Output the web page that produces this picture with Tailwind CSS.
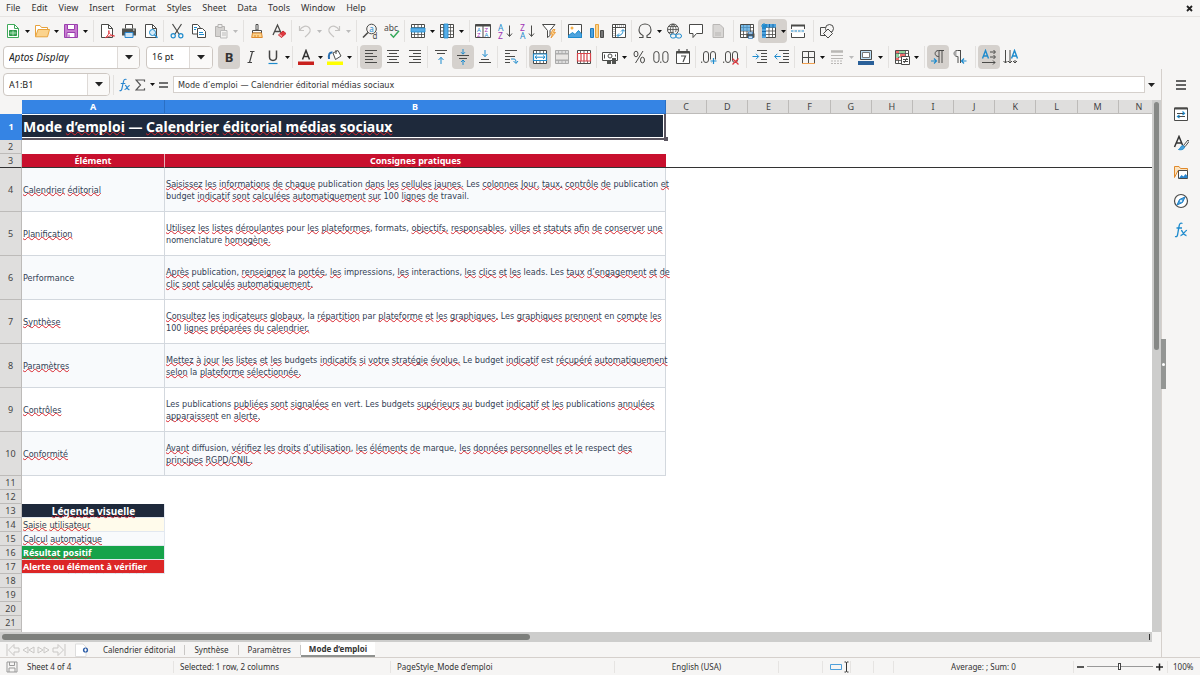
<!DOCTYPE html>
<html lang="fr">
<head>
  <meta charset="UTF-8">
  <meta name="viewport" content="width=device-width, initial-scale=1">
  <title>Calendrier éditorial - Mode d'emploi</title>
  <script src="https://cdn.jsdelivr.net/npm/@tailwindcss/browser@4"></script>
</head>
<body class="h-screen flex flex-col overflow-hidden bg-[#f6f5f4] text-[#333] font-['Noto_Sans',sans-serif] text-[9px] leading-[12px]">

  <!-- Menu -->
  <header class="h-[17px] shrink-0 flex items-center justify-between border-b border-[#e6e4e2] pl-px pr-[7px]">
    <nav id="menu" class="flex gap-px"></nav>
    <button aria-label="Close document">
      <svg class="size-[7px]" viewBox="0 0 7 7" stroke="#222" stroke-width="1.8"><path d="M1 1l5 5M6 1L1 6"/></svg>
    </button>
  </header>

  <!-- Barres d'outils -->
  <div id="standard" class="h-7 shrink-0 flex items-center pl-[2px]"></div>
  <div class="h-6 shrink-0 flex items-center pl-[3px]">
    <div class="flex h-[23px] w-[137px] rounded border border-[#cdc7c2] bg-white overflow-hidden">
      <input aria-label="Font name" value="Aptos Display" class="min-w-0 flex-1 pl-[5px] text-[10px] italic text-[#222] outline-none">
      <button aria-label="Choose font" class="w-[22px] border-l border-[#dedad7] bg-[#faf9f8] grid place-items-center"><svg class="w-2 h-[5px]" viewBox="0 0 8 5"><path d="M0 0h8L4 4.5z" fill="#222"/></svg></button>
    </div>
    <div class="flex h-[23px] w-[67px] ml-[6px] rounded border border-[#cdc7c2] bg-white overflow-hidden">
      <input aria-label="Font size" value="16 pt" class="min-w-0 flex-1 pl-[5px] text-[#222] outline-none">
      <button aria-label="Choose size" class="w-[23px] border-l border-[#dedad7] bg-[#faf9f8] grid place-items-center"><svg class="w-2 h-[5px]" viewBox="0 0 8 5"><path d="M0 0h8L4 4.5z" fill="#222"/></svg></button>
    </div>
    <div id="formatting" class="flex items-center ml-[5px]"></div>
  </div>

  <div class="flex-1 min-h-0 flex">
    <main class="flex-1 min-w-0 flex flex-col">

      <!-- Barre de formule -->
      <div class="h-[31px] shrink-0 flex items-center pl-[3px] pr-1">
        <div class="flex h-[23px] w-[107px] rounded border border-[#cdc7c2] bg-white overflow-hidden">
          <input aria-label="Name box" value="A1:B1" class="min-w-0 flex-1 pl-[5px] text-[#222] outline-none">
          <button aria-label="Named ranges" class="w-[22px] border-l border-[#dedad7] bg-[#faf9f8] grid place-items-center"><svg class="w-2 h-[5px]" viewBox="0 0 8 5"><path d="M0 0h8L4 4.5z" fill="#222"/></svg></button>
        </div>
        <div class="flex items-center ml-[3px] pl-[5px] border-l border-[#e3e1df] h-5">
          <button aria-label="Function wizard" class="w-4"><svg class="w-3 h-[14px]" viewBox="0 0 12 14" fill="none" stroke="#2a86cf" stroke-width="1.2"><path d="M7.5 1.5c-2-.8-2.7.5-3 2L2.8 11.2c-.3 1.3-1 1.8-2.3 1.3M1.8 5.5h4.5M6 7.5c1.8-.5 1.8 4.5 4.5 4M10.8 7.5c-1.5-.5-3.5 4.5-5.3 4"/></svg></button>
          <button aria-label="Select function" class="w-6 flex items-center gap-1"><svg class="w-[11px] h-3" viewBox="0 0 11 12" fill="none" stroke="#555" stroke-width="1.2"><path d="M9.5 2.8V1H1l4.5 5L1 11h8.5V9.2"/></svg><svg class="w-[5px] h-[3px]" viewBox="0 0 5 3"><path d="M0 0h5L2.5 3z" fill="#111"/></svg></button>
          <button aria-label="Formula" class="w-[14px]"><svg class="w-[9px] h-[14px]" viewBox="0 0 9 14" stroke="#444" stroke-width="1.5"><path d="M0 5h9M0 9h9"/></svg></button>
        </div>
        <input aria-label="Formula input" value="Mode d’emploi — Calendrier éditorial médias sociaux" class="flex-1 min-w-0 h-[17px] pl-1 border border-[#d5d0cc] bg-white font-['DejaVu_Sans_Condensed',sans-serif] outline-none">
        <button aria-label="Expand formula bar" class="w-3 grid place-items-center"><svg class="w-[7px] h-1" viewBox="0 0 7 4"><path d="M0 0h7L3.5 4z" fill="#222"/></svg></button>
      </div>

      <!-- Feuille -->
      <div class="flex-1 min-h-0 flex">
        <div class="flex-1 min-w-0 overflow-hidden bg-white">
          <table class="table-fixed w-[calc(100%+8px)] border-separate border-spacing-0 text-[#334155] [&_u]:decoration-wavy [&_u]:decoration-[#d8242c] [&_u]:decoration-1 [&_u]:-underline-offset-1 [&_u]:[text-decoration-skip-ink:none]">
            <thead>
              <tr id="colonnes" class="h-[14px]"></tr>
            </thead>
            <tbody id="cellules"></tbody>
          </table>
        </div>
        <div class="w-[9px] bg-[#cdcdcc] pt-[2px] flex justify-center">
          <div class="w-[5px] h-[248px] rounded-full bg-[#868886]"></div>
        </div>
      </div>

      <div class="flex h-[10px] shrink-0 mr-[9px] bg-[#cdcdcc] items-center justify-between pl-[2px] pr-[2px]">
        <div class="h-[6px] w-[46%] rounded-full bg-[#7d7f7c]"></div>
        <div class="h-[6px] w-px bg-[#333]"></div>
      </div>

      <!-- Onglets -->
      <div class="h-[15px] shrink-0 flex items-center">
        <div class="flex pl-[6px] w-[70px] text-[#c9c7c5]">
          <button aria-label="First sheet"><svg class="w-[15px] h-3" viewBox="0 0 15 12" fill="none" stroke="currentColor"><path d="M1 0v12M8 .5L2.500 6 8 11.500V8h5V4H8z"/></svg></button>
          <button aria-label="Previous sheet"><svg class="w-[15px] h-3" viewBox="0 0 15 12" fill="none" stroke="currentColor"><path d="M7 3L2 6l5 3zM13 3L8 6l5 3z"/></svg></button>
          <button aria-label="Next sheet"><svg class="w-[15px] h-3" viewBox="0 0 15 12" fill="none" stroke="currentColor"><path d="M2 3l5 3-5 3zM8 3l5 3-5 3z"/></svg></button>
          <button aria-label="Last sheet"><svg class="w-[15px] h-3" viewBox="0 0 15 12" fill="none" stroke="currentColor"><path d="M14 0v12M7 .5L12.500 6 7 11.500V8H2V4h5z"/></svg></button>
        </div>
        <button aria-label="Add sheet" class="w-[24px] pl-[5px]"><svg class="w-[14px] h-[14px]" viewBox="0 0 14 14"><path d="M.5 1h7.5l3 3v9.500H.5z" fill="#fff" stroke="#ddd"/><circle cx="10.5" cy="7" r="2.600" fill="#2f5fa8"/><path d="M10.5 5.500v3M9 7h3" stroke="#fff"/></svg></button>
        <div id="onglets" class="flex h-full items-center text-[8px]"></div>
      </div>
    </main>

    <!-- Barre latérale -->
    <aside class="relative w-[39px] shrink-0 border-l border-[#d5d0cc] flex flex-col items-center pt-px">
      <div id="lateral" class="flex flex-col"></div>
      <button aria-label="Hide sidebar" class="absolute -left-px top-[270px] w-[5px] h-[50px] bg-[#949694] grid place-items-center"><span class="size-[3px] rounded-full bg-white"></span></button>
    </aside>
  </div>

  <!-- Barre d'état -->
  <footer class="h-[18px] shrink-0 flex items-center border-t border-[#d5d0cc] text-[8px] [&>*]:shrink-0">
    <svg class="size-3 ml-[6px] mr-[9px]" viewBox="0 0 12 12" fill="none" stroke="#999"><path d="M1 1h10v10H1zM3.5 1v3.500h5V1M3 11V7h6v4"/></svg>
    <span class="w-[146px]">Sheet 4 of 4</span>
    <span class="w-[217px] border-l border-[#e6e4e2] pl-[6px]">Selected: 1 row, 2 columns</span>
    <span class="w-[224px] border-l border-[#e6e4e2] pl-[6px]">PageStyle_Mode d’emploi</span>
    <span class="flex-1 border-l border-[#e6e4e2] text-center">English (USA)</span>
    <span class="w-[44px] h-3 border-l border-[#e6e4e2]"></span>
    <span class="w-[28px] border-l border-[#e6e4e2] pl-[7px]"><svg class="w-[19px] h-3" viewBox="0 0 19 12" fill="none"><path d="M.5 3.500h11v5H.5z" stroke="#4d9fdb"/><path d="M14.5 1H16l.5.500.5-.5h1.500M16.500 1.500v9M14.500 11H16l.5-.5.5.5h1.500" stroke="#333"/></svg></span>
    <span class="w-[23px] h-3 border-l border-[#e6e4e2]"></span>
    <span class="w-[20px] h-3 border-l border-[#e6e4e2]"></span>
    <span class="w-[180px] border-l border-[#e6e4e2] text-center">Average: ; Sum: 0</span>
    <div class="w-[94px] flex items-center gap-[3px] border-l border-[#e6e4e2] pl-[3px]">
      <button aria-label="Zoom out"><svg class="w-[7px] h-3" viewBox="0 0 7 12" stroke="#222" stroke-width="1.5"><path d="M0 6h7"/></svg></button>
      <input type="range" aria-label="Zoom" min="0" max="100" value="49" class="w-[66px] h-3 appearance-none bg-transparent [&::-webkit-slider-runnable-track]:h-px [&::-webkit-slider-runnable-track]:bg-[#999] [&::-webkit-slider-thumb]:appearance-none [&::-webkit-slider-thumb]:w-[3px] [&::-webkit-slider-thumb]:h-[7px] [&::-webkit-slider-thumb]:-mt-[3px] [&::-webkit-slider-thumb]:bg-white [&::-webkit-slider-thumb]:border [&::-webkit-slider-thumb]:border-[#444]">
      <button aria-label="Zoom in"><svg class="w-[7px] h-3" viewBox="0 0 7 12" stroke="#222" stroke-width="1.5"><path d="M0 6h7M3.5 2.500v7"/></svg></button>
    </div>
    <span class="w-[33px] border-l border-[#e6e4e2] pl-[5px]">100%</span>
  </footer>

  <script>
    const B = '#1e8bcd', K = '#4a4a48';

    // ---------- menu ----------
    document.getElementById('menu').innerHTML = ['File', 'Edit', 'View', 'Insert', 'Format', 'Styles', 'Sheet', 'Data', 'Tools', 'Window', 'Help']
      .map(m => `<button class="px-[5px]">${m}</button>`).join('');

    // ---------- icônes (grille 16x16) ----------
    const page = c => `<path d="M2.5 1.5h7l4 4v9h-11z" fill="#fff" stroke="${c}"/><path d="M9.5 1.5v4h4" stroke="${c}"/>`;
    const lignes = (...l) => `<path d="${l.map(([x, y, w]) => `M${x} ${y}h${w}`).join('')}" stroke="${K}"/>`;
    const grille = (c, fill = '#fff') => `<path d="M1.5 1.5h13v13h-13z" fill="${fill}" stroke="${c}"/><path d="M1.5 4.5h13M1.5 8h13M1.5 11.5h13M4.5 1.5v13M8 1.5v13M11.5 1.5v13" stroke="${c}" stroke-width=".8"/>`;
    const txt = (x, y, s, c, t) => `<text x="${x}" y="${y}" font-size="${s}" fill="${c}" stroke="none">${t}</text>`;

    const icones = {
      nouveau: page('#3faa5a') + '<path d="M4.5 7.5h7v5h-7z" fill="#3faa5a" stroke="#2c9347"/><path d="M4.5 10h7M8 7.5v5" stroke="#d8f0dd" stroke-width=".7"/>',
      ouvrir: '<path d="M1.5 13.5v-11H6l1.500 2h6v2" fill="#fff" stroke="#e8a33d"/><path d="M1.5 13.800L4 6.500h11.500l-2 7.300z" fill="#fbd38d" stroke="#e8a33d"/>',
      enregistrer: '<path d="M1.5 1.5h13v13h-13z" fill="#c77bd0" stroke="#9b3fae"/><path d="M4.5 1.5h7v5h-7zM4 14.5v-5h8v5z" fill="#fff" stroke="#9b3fae"/><path d="M6 11.5v3" stroke="#9b3fae"/>',
      pdf: page(K) + '<path d="M6 15c3-2 4.5-5 4-7.500-1.500 1 1 5 5.500 5.500-3-1-6 .2-8 1.500" stroke="#e0393f"/>',
      imprimer: '<path d="M4.5 5.500v-4h7v4" fill="#fff" stroke="#4a4a48"/><path d="M1 5.500h14v7H1z" fill="#50524f"/><path d="M4 9.500h8v5H4z" fill="#cfe5f5" stroke="#2a86cf"/><path d="M12 7h1.500" stroke="#fff"/>',
      apercu: page(K) + `<circle cx="9.5" cy="9.5" r="3" fill="#d7ebf8" stroke="${B}"/><path d="M11.5 11.800l3 3" stroke="${B}" stroke-width="1.4"/>`,
      couper: `<path d="M3.5 1L10 11M12.500 1L6 11" stroke="${K}" stroke-width="1.2"/><circle cx="4.2" cy="12.8" r="2.1" stroke="${B}" stroke-width="1.2"/><circle cx="11.8" cy="12.8" r="2.1" stroke="${B}" stroke-width="1.2"/>`,
      copier: `<path d="M1.5 1.5h5L9 4v7H1.500z" fill="#fff" stroke="${K}"/><path d="M6.5 5.500h5l3 3v6h-8z" fill="#fff" stroke="${K}"/><path d="M3 4.500h3M3 6.500h2M8 9.500h4M8 11.500h5" stroke="${B}"/>`,
      coller: '<path d="M2.5 3.500h9v10h-9z" fill="#d4d2d0" stroke="#b5b3b1"/><path d="M5 1.500h4v3H5z" fill="#eee" stroke="#b5b3b1"/><path d="M7.5 7.500H14V15H7.500z" fill="#f4f3f2" stroke="#bbb"/><path d="M9 10h4M9 12h4" stroke="#bbb"/>',
      cloner: `<path d="M7 1.500h2v5.500H7z" fill="#fff" stroke="${K}"/><path d="M3.5 7.500h9V10h-9z" fill="#fff" stroke="${K}"/><path d="M3.5 10h9l.8 4.500H2.700z" fill="#fbd38d" stroke="#e08a2c"/><path d="M6 12v2.500M9 12v2.500" stroke="#e08a2c"/>`,
      effacer: `<path d="M2 12L6.500 2 11 12M3.500 8.500h6" stroke="${K}" stroke-width="1.3"/><path d="M7.5 12l4.500-4 3 2.500-4.500 4z" fill="#e0393f" stroke="#c92a30"/><path d="M8.5 11.500l2.500 2" stroke="#f5a5a7" stroke-width="1.5"/>`,
      annuler: '<path d="M2.5 3v4.500H7M2.800 7.300C5 3 9.500 2 12 4.500s1.500 5-4 9.500" stroke="#c6c4c2" stroke-width="1.2"/>',
      retablir: '<path d="M13.5 3v4.500H9M13.200 7.300C11 3 6.500 2 4 4.500s-1.500 5 4 9.500" stroke="#c6c4c2" stroke-width="1.2"/>',
      rechercher: `<circle cx="9.5" cy="6" r="4.800" stroke="${K}"/><path d="M6 9.500L1 14.500" stroke="${K}" stroke-width="1.6"/>` + txt(7.3, 8.500, 8, B, 'a') + txt(10.5, 15.500, 8, K, 'd'),
      orthographe: txt(0, 7.500, 8.500, K, 'abc') + '<path d="M6.5 11l3 3.200 5.500-6.500" stroke="#35a85a" stroke-width="1.5"/>',
      ligne: grille(K) + `<path d="M1 5h14v4H1z" fill="#58aee8" stroke="${B}" stroke-width=".8"/>`,
      colonne: grille(K) + `<path d="M5 1h4v14H5z" fill="#58aee8" stroke="${B}" stroke-width=".8"/>`,
      trier: `<path d="M.5 1.500h15v13H.5zM8 1.500v13" fill="#fff" stroke="${K}"/><path d="M.5 2.500h15" stroke="${K}" stroke-width="2"/>` + txt(2, 8.500, 6, B, 'A') + txt(2, 14, 6, '#a033b5', 'Z') + txt(9.5, 8.500, 6, '#a033b5', 'Z') + txt(9.5, 14, 6, B, 'A'),
      croissant: txt(1, 7.500, 8.500, B, 'A') + txt(1, 15.500, 8.500, '#a033b5', 'Z') + `<path d="M12.5 2.500v10.500M10 10.500l2.500 3 2.500-3" stroke="${K}"/>`,
      decroissant: txt(1, 7.500, 8.500, '#a033b5', 'Z') + txt(1, 15.500, 8.500, B, 'A') + `<path d="M12.5 2.500v10.500M10 10.500l2.500 3 2.500-3" stroke="${K}"/>`,
      filtre: `<path d="M1.5 1.500H14L9 7.500v5l-2.500 2v-7z" fill="#fff" stroke="${K}"/><path d="M12 6.500L9.500 11h2L10 15l4.500-5.500h-2l1.500-3z" fill="#fbd38d" stroke="#e8912c" stroke-width=".8"/>`,
      image: `<path d="M1.5 1.500h13v13h-13z" fill="#fff" stroke="${K}"/><path d="M1.5 14v-1.500L5.500 9.500l2.500 2 3.500-4 3 3.500v3.500h-13z" fill="#4da3de" stroke="${B}"/><circle cx="5" cy="5" r="1.5" fill="#f5b04c"/>`,
      diagramme: '<path d="M1.5 5.500h3v9h-3z" fill="#4da3de" stroke="#1e7bc0"/><path d="M6.5 1.500h3v13h-3z" fill="#fbd38d" stroke="#e8a33d"/><path d="M11.5 7.500h3v7h-3z" fill="#777" stroke="#4a4a48"/>',
      pivot: `<path d="M1.5 1.500h13v13h-13zM4.500 1.500v13M1.500 4.500h13" fill="#fff" stroke="${K}"/><path d="M6.5 12.500c4 0 5.500-2 5.500-5.500M10 8.500l2-2 2 2M8 10.500l-2 2 2 2" stroke="${B}"/><path d="M6 3h7M3 6v7" stroke="#888" stroke-dasharray="1 1"/>`,
      omega: `<path d="M2 14.500h4v-2C3 11 2 9 2 7c0-3.500 2.500-6 6-6s6 2.500 6 6c0 2-1 4-4 5.500v2h4" stroke="${K}" stroke-width="1.1"/>`,
      lien: `<circle cx="7" cy="6.500" r="5.500" stroke="${K}"/><path d="M7 1v11M1.500 6.500h11M2.500 3.500h9M2.500 9.500h5M7 1c-3.500 3-3.500 8 0 11M7 1c3.500 3 3.500 6 2.500 8" stroke="${K}" stroke-width=".8"/><rect x="4.5" y="11" width="5.500" height="4" rx="2" fill="#f6f5f4" stroke="${B}"/><rect x="10" y="11" width="5.500" height="4" rx="2" fill="#f6f5f4" stroke="${B}"/>`,
      commentaire: `<path d="M1.5 1.500h13v9h-6L5 14.500v-4H1.500z" fill="#fff" stroke="${K}"/>`,
      entete: '<path d="M3 1.500h7l3.500 3.500v9.500H3z" fill="#d9d7d5" stroke="#b9b7b5"/><path d="M5 12h6M5 10h6" stroke="#b9b7b5"/>',
      zone: grille(K) + '<path d="M2 2h9v6H2z" fill="#4da3de" opacity=".75"/><path d="M7.5 10.500h8v4h-8z" fill="#50524f"/><path d="M9.5 9h4v2h-4zM9.500 13h4v2.500h-4z" fill="#cfe5f5" stroke="#2a6fb0" stroke-width=".7"/>',
      figer: grille(K) + `<path d="M1 1h14v3.500H5V15H1z" fill="#4da3de"/><path d="M1 5h4M1 8.500h4M1 12h4M5 1v3.500M8.500 1v3.500M12 1v3.500" stroke="#1569ad"/><path d="M3 0v6M0 3h6M1 1l4 4M5 1L1 5" stroke="${B}"/>`,
      scinder: `<path d="M1.5 6V2.500h13V6M1.500 10v4.500h13V10" fill="#fff" stroke="${K}"/><path d="M1 2.500h14" stroke="${K}" stroke-width="2"/><path d="M1 8h14" stroke="${B}" stroke-dasharray="2.500 1"/>`,
      formes: `<path d="M1.5 4.500h7v8h-7z" stroke="${K}"/><circle cx="10.5" cy="5.500" r="4" fill="#f6f5f4" stroke="${K}"/><path d="M9 6l4.500 4.500L9 15l-4.500-4.500z" fill="#f6f5f4" stroke="${K}"/>`,
      gras: '<text x="8" y="13" text-anchor="middle" font-size="13" font-weight="700" fill="#333" stroke="none">B</text>',
      italique: '<path d="M7 2.500h4.500M4.500 13.500H9M9.500 2.500l-3 11" stroke="#444" stroke-width="1.2"/>',
      souligne: `<path d="M4.500 1.500V8c0 4.500 7 4.500 7 0V1.500" stroke="#444" stroke-width="1.500"/><path d="M3.500 14.500h9" stroke="${B}" stroke-width="1.2"/>`,
      couleur: '<path d="M4.500 10.500L8 1.500l3.500 9M5.500 7.500h5" stroke="#333" stroke-width="1.500"/><path d="M0 12.500h16V16H0z" fill="#c9211e"/>',
      remplissage: '<path d="M0 12.500h16V16H0z" fill="#ffff00"/><path d="M6 4l5-2.500 3 5.500-5.500 3.500z" fill="#fff" stroke="#4a4a48"/><path d="M9 5V1" stroke="#4a4a48"/><path d="M5.500 3.500C2.500 3 1.500 5 2 10" stroke="#2a6fb0" stroke-width="2"/>',
      gauche: lignes([2, 1.500, 12], [2, 4.500, 8], [2, 7.500, 12], [2, 10.500, 8], [2, 13.500, 12]),
      centre: lignes([2, 1.500, 12], [4, 4.500, 8], [2, 7.500, 12], [4, 10.500, 8], [2, 13.500, 12]),
      droite: lignes([2, 1.500, 12], [6, 4.500, 8], [2, 7.500, 12], [6, 10.500, 8], [2, 13.500, 12]),
      haut: lignes([2, 1.500, 12], [4, 4.500, 8]) + `<path d="M8 15V8.500M5.500 11L8 8.300l2.500 2.700" stroke="${B}"/>`,
      milieu: lignes([2, 6.500, 12], [4, 9.500, 8]) + `<path d="M8 0v5M6 3.200l2 2 2-2M8 16v-5M6 13l2-2 2 2" stroke="${B}"/>`,
      bas: lignes([4, 10.500, 8], [2, 13.500, 12]) + `<path d="M8 1v6.500M5.500 5L8 7.700 10.500 5" stroke="${B}"/>`,
      renvoi: lignes([2, 1.500, 12], [2, 4.500, 5], [2, 7.500, 10], [2, 10.500, 5], [2, 13.500, 5]) + `<path d="M8 10h3c1.500 0 2 1 2 4M10.500 12l2.500 2.500 2-2.500" stroke="${B}"/>`,
      fusionner: grille(K) + `<path d="M1.500 5h13v6.500h-13z" fill="#fff" stroke="${B}" stroke-width="1.2"/><path d="M3 8.200h10M5 6.500L3 8.200 5 10M11 6.500l2 1.700-2 1.800" stroke="${B}"/>`,
      fusion2: grille('#aaa', '#ddd') + '<path d="M1.500 5h13v6h-13z" fill="#e8e6e4" stroke="#aaa"/>',
      defusion: grille(K) + '<path d="M1.500 4.500h13v7.500h-13zM5 4.500V12M8 4.500V12M11 4.500V12" fill="#fff" stroke="#d6434a" stroke-width="1.2"/>',
      devise: `<path d="M.5 3.500h15v8H.5z" fill="#fff" stroke="${K}"/><circle cx="8" cy="7" r="2" stroke="${K}"/><path d="M5 11h4v4H5zM10 9h4v6h-4z" fill="#50524f"/><path d="M2.500 5.500v4M13.500 5.500v2" stroke="${K}"/>`,
      pourcent: `<ellipse cx="5" cy="5" rx="2" ry="2.800" stroke="${K}"/><ellipse cx="11.500" cy="11" rx="2" ry="2.800" stroke="${K}"/><path d="M12 2L4.500 14" stroke="${K}"/>`,
      nombre: `<rect x=".8" y="2.500" width="5.200" height="11" rx="2.600" stroke="${K}"/><rect x="9.800" y="2.500" width="5.200" height="11" rx="2.600" stroke="${K}"/><path d="M7.800 12.500v1.500" stroke="${K}"/>`,
      date: `<path d="M1.500 2.500h13v12h-13z" fill="#fff" stroke="${K}"/><path d="M1.500 3.500h13" stroke="${K}" stroke-width="2"/><path d="M4 0v3M12 0v3M6 7h4.500L8 13" stroke="${K}" stroke-width="1.2"/>`,
      ajoutDec: `<path d="M.7 12.500V14" stroke="${K}"/><rect x="2.500" y="2.500" width="5" height="11" rx="2.500" stroke="${K}"/><rect x="9.500" y="2.500" width="5" height="11" rx="2.500" stroke="${K}"/><path d="M12.500 8v8M9 12h7" stroke="#f6f5f4" stroke-width="3"/><path d="M12.500 9v6M9.500 12h6" stroke="${B}" stroke-width="1.2"/>`,
      retraitDec: `<path d="M.7 12.500V14" stroke="${K}"/><rect x="2.500" y="2.500" width="5" height="11" rx="2.500" stroke="${K}"/><rect x="9.500" y="2.500" width="5" height="11" rx="2.500" stroke="${K}"/><path d="M9.500 9.500l6 6M15.500 9.500l-6 6" stroke="#e0393f" stroke-width="1.2"/>`,
      augmenter: lignes([5, 1.500, 10], [9, 4.500, 6], [9, 7.500, 6], [9, 10.500, 6], [5, 13.500, 10]) + `<path d="M.5 7.500h6M4 4.800l2.700 2.700L4 10.200" stroke="${B}"/>`,
      diminuer: lignes([5, 1.500, 10], [9, 4.500, 6], [9, 7.500, 6], [9, 10.500, 6], [5, 13.500, 10]) + `<path d="M.8 7.500h6M3.300 4.800L.6 7.500l2.700 2.700" stroke="${B}"/>`,
      bordures: `<path d="M2.500 2.500h12v12M2.500 2.500v12M8.500 2.500v12M2.500 8.500h12" stroke="${K}"/><path d="M2 14.500h13" stroke="#f0a050"/>`,
      style: '<path d="M2 2.500h12" stroke="#b9b7b5" stroke-width="2.500"/><path d="M2 6.500h12M2 9.500h12" stroke="#b9b7b5"/><path d="M2 12h12M2 14.500h12" stroke="#b9b7b5" stroke-dasharray="2 1"/>',
      bordCouleur: `<path d="M2.500 1.500h11v9h-11z" fill="#bfe0f6" stroke="${K}"/><path d="M4.500 3.500h7v5h-7z" fill="#fff" stroke="#777"/><path d="M0 12h16v4H0z" fill="#2a6099"/>`,
      conditionnel: grille(K) + '<path d="M2 2h3v2H2zM2 9h3v2H2zM6 5h5v3H6z" fill="#ef6f6f"/><path d="M5 2h6v2H5zM2 5h3v3H2z" fill="#8fd39b"/><path d="M7.500 7.500h8v8h-8z" fill="#fff" stroke="#4a4a48"/><path d="M9 10.500h5M9 12.500h5M13 9l-3 5" stroke="#4a4a48"/>',
      gaucheDroite: `<path d="M14 1.500H8.500c-4.500 0-4.500 6 0 6H9M9 1.500V14M12 1.500V14" stroke="${K}"/><path d="M1 12h5M4 9.500L6.500 12 4 14.500" stroke="${B}" stroke-width="1.2"/>`,
      droiteGauche: `<path d="M9 1.500H5.500c-4.500 0-4.500 6 0 6H6V14M8.500 1.500V14" stroke="${K}"/><path d="M4.500 2c-3 0-3 5 0 5z" fill="#aaa"/><path d="M14.500 12H10M12 9.500L9.500 12l2.500 2.500" stroke="${B}" stroke-width="1.2"/>`,
      horizontal: `<path d="M1.500 9.500L4.500 1.500l3 8M2.500 7h4" stroke="${B}" stroke-width="1.4"/><path d="M9 3h5M12.500 1L14.500 3l-2 2M9 8h5M12.500 6l2 2-2 2M1 13.500h13M12 11.500l2 2-2 2" stroke="${K}"/>`,
      vertical: `<path d="M8.500 9.500l3-8 3 8M9.500 7h4" stroke="${B}" stroke-width="1.4"/><path d="M2.500 1v13M.5 12l2 2 2-2M7 1v13M5 12l2 2 2-2M12 11v3M10 12l2 2 2-2" stroke="${K}"/>`,
      menu: '<path d="M3 4h10M3 8h10M3 12h10" stroke="#333" stroke-width="1.500"/>',
      proprietes: `<path d="M1.500 2h13v12.500h-13z" fill="#fff" stroke="${K}"/><path d="M1.500 2.500h13" stroke="${K}" stroke-width="2"/><path d="M4 7.500h8M4 10.500h8" stroke="${K}"/><path d="M9.500 5.500l2 2-2 1.500M6.500 9l-2 1.500 2 1.500" stroke="${B}" stroke-width="1.2"/>`,
      styles: `<path d="M1.500 12L6 1.500 9.500 10M3 8h5.500" stroke="#333" stroke-width="1.500"/><path d="M15 5l-4.500 5.500 1.500 1.200L16 6.500z" fill="#fff" stroke="${K}"/><path d="M5.500 14.500c2 .5 5.500.5 6-2.500L10 10.500c-3 .5-2 3-4.500 4z" fill="#4da3de" stroke="${B}"/>`,
      galerie: `<path d="M1.500 13.500v-11H6l1.500 2h7v2H5l-3.500 7z" fill="#fbe3c0" stroke="#e08a2c"/><path d="M5.500 6.500h9v8h-9z" fill="#fff" stroke="${K}"/><path d="M6 14l2.500-3 2 1.500 2-2.500 2 2v2z" fill="#2a86cf"/>`,
      navigateur: `<circle cx="8" cy="8" r="6.500" fill="#fff" stroke="${K}" stroke-width="1.2"/><path d="M12 4l-2.500 5.500L4 12l2.500-5.500z" fill="#4da3de" stroke="#1e7bc0"/><circle cx="8" cy="8" r="1" fill="#fff"/>`,
      fonctions: `<path d="M9.500 1.500c-2.300-1-3 .5-3.400 2.500L4.500 13c-.4 1.700-1.200 2-2.500 1.500M3.500 6H9M8 8.500c2-.5 2 5.500 5.500 5M14 8.500c-2-.5-4 5.500-6.500 5" stroke="${B}" stroke-width="1.3"/>`
    };

    const svg = nom => `<svg class="size-4" viewBox="0 0 16 16" fill="none">${icones[nom]}</svg>`;

    // nom | nom+ (menu déroulant) | nom* (activé) | nom- (menu grisé) | "s" et "l" = séparateurs
    function barre(id, liste) {
      document.getElementById(id).innerHTML = liste.split(' ').map(e => {
        if (e === 's') return '<span class="w-px h-[22px] mr-[2px] ml-px bg-[#e3e1df]"></span>';
        if (e === 'l') return '<span class="w-px h-[22px] mr-[2px] ml-1 bg-[#e3e1df]"></span>';
        const nom = e.replace(/[+*-]/g, '');
        const actif = e.includes('*') ? 'bg-[#d5d1cd]' : '';
        if (/[+-]/.test(e)) {
          const c = e.includes('-') ? '#bbb' : '#111';
          return `<button aria-label="${nom}" class="w-[29px] h-6 pl-[3px] flex items-center gap-1 rounded ${actif}">${svg(nom)}<svg class="w-[5px] h-[3px]" viewBox="0 0 5 3"><path d="M0 0h5L2.500 3z" fill="${c}"/></svg></button>`;
        }
        return `<button aria-label="${nom}" class="w-[22px] h-6 grid place-items-center rounded ${actif}">${svg(nom)}</button>`;
      }).join('');
    }

    barre('standard', 'nouveau+ ouvrir+ enregistrer+ l pdf imprimer apercu s couper copier coller- l cloner effacer s annuler- retablir- l rechercher orthographe s ligne+ colonne+ l trier croissant decroissant filtre s image diagramme pivot s omega+ lien commentaire entete l zone figer*+ scinder l formes');
    barre('formatting', 'gras* italique souligne+ s couleur+ remplissage+ l gauche* centre droite s haut milieu* bas s renvoi l fusionner* fusion2 defusion s devise+ pourcent nombre date s ajoutDec retraitDec l augmenter diminuer s bordures+ style- bordCouleur+ l conditionnel+ l gaucheDroite* droiteGauche l horizontal* vertical');

    document.getElementById('lateral').innerHTML = ['menu', 'proprietes', 'styles', 'galerie', 'navigateur', 'fonctions']
      .map(n => `<button aria-label="${n}" class="h-[29px] w-6 grid place-items-center">${svg(n)}</button>`).join('');

    // ---------- feuille ----------
    // les mots entre crochets sont signalés par le correcteur
    const corriger = t => t.replace(/\[([^\]]+)\]/g, (_, g) => g.split(' ').map(m => `<u>${m}</u>`).join(' '));

    const lignesTexte = [
      ['[Calendrier éditorial]', '[Saisissez les informations de chaque] publication [dans les cellules jaunes.] Les [colonnes Jour, taux, contrôle de] publication [et]<br>budget [indicatif sont calculées automatiquement sur] 100 [lignes de] travail.'],
      ['[Planification]', '[Utilisez les listes déroulantes] pour [les plateformes], formats, [objectifs, responsables], [villes et statuts afin de conserver une]<br>nomenclature [homogène.]'],
      ['Performance', '[Après] publication, [renseignez] la [portée], [les] impressions, [les] interactions, [les clics et les] leads. Les [taux d’engagement et de]<br>[clic sont calculés automatiquement.]'],
      ['[Synthèse]', '[Consultez les indicateurs globaux], la [répartition] par [plateforme et les graphiques.] Les [graphiques prennent] en [compte les]<br>100 [lignes préparées du calendrier.]'],
      ['[Paramètres]', '[Mettez à jour les listes et les] budgets [indicatifs si votre stratégie évolue.] Le budget [indicatif] est [récupéré automatiquement]<br>[selon] la [plateforme sélectionnée.]'],
      ['[Contrôles]', 'Les publications [publiées sont signalées] en vert. Les budgets [supérieurs au] budget [indicatif et les] publications [annulées]<br>[apparaissent] en [alerte.]'],
      ['[Conformité]', '[Avant] diffusion, [vérifiez les droits d’utilisation], [les éléments de] marque, [les données personnelles et le] respect [des]<br>[principes RGPD/CNIL.]']
    ];

    const cellule = "font-['DejaVu_Sans_Condensed',sans-serif]";
    const legende = {
      13: ['[Légende visuelle]', 'bg-[#1e293b] text-white font-bold text-center text-[10px]'],
      14: ['[Saisie utilisateur]', 'bg-[#fffbeb] ' + cellule],
      15: ['[Calcul automatique]', 'bg-[#f8fafc] ' + cellule],
      16: ['[Résultat positif]', 'bg-[#16a34a] text-white font-bold'],
      17: ['Alerte ou [élément] à [vérifier]', 'bg-[#dc2626] text-white font-bold']
    };

    document.getElementById('colonnes').innerHTML =
      '<td class="w-[22px] p-0 bg-[#f6f5f4]"></td>' +
      'ABCDEFGHIJKLMN'.split('').map(c => {
        const large = c === 'A' ? 'w-[143px]' : c === 'B' ? 'w-[501px]' : '';
        const teinte = c < 'C' ? 'bg-[#3584e4] text-white font-bold border-[#2a6fc4]' : 'bg-[#dfdedd] text-[#444] font-normal border-[#bdbbb9]';
        return `<th scope="col" class="${large} ${teinte} p-0 border-r border-b">${c}</th>`;
      }).join('');

    const entete = (n, extra = 'border-[#bdbbb9]') => `<th scope="row" class="p-0 font-normal text-[#444] bg-[#dfdedd] border-r border-b ${extra}">${n}</th>`;
    const vide = '<td class="p-0"></td>';
    let html = `<tr class="h-[26px]">
      <th scope="row" class="p-0 bg-[#3584e4] text-white font-bold">1</th>
      <td colspan="2" class="relative p-0 pl-px bg-[#1e293b] text-white text-[14px] leading-[18px] font-bold">${corriger('Mode [d’emploi] — [Calendrier éditorial médias sociaux]')}
        <span class="absolute inset-0 border-r-2 border-b-2 border-[#5a5560]"></span>
        <span class="absolute inset-0 right-[2px] bottom-[2px] border-t border-r border-b border-white"></span>
        <span class="absolute -right-[2px] -bottom-px size-1 bg-[#5a5560]"></span>
      </td></tr>
      <tr class="h-[14px]">${entete(2)}${vide}</tr>
      <tr class="h-[14px]">${entete(3, 'border-r-[#bdbbb9] border-b-[#333]')}
        <th scope="col" class="p-0 bg-[#c8102e] text-white font-bold border-r border-b border-r-[#e8b0b8] border-b-[#333]">${corriger('[Élément]')}</th>
        <th scope="col" class="p-0 bg-[#c8102e] text-white font-bold border-b border-[#333]">${corriger('[Consignes pratiques]')}</th>
        <td colspan="12" class="p-0 border-b border-[#333]"></td></tr>`;

    lignesTexte.forEach(([a, b], i) => {
      const fond = i % 2 ? 'bg-white' : 'bg-[#f8fafc]';
      html += `<tr class="h-11">${entete(i + 4)}
        <td class="p-0 pl-px border-r border-b border-[#d3d8de] ${cellule} ${fond}">${corriger(a)}</td>
        <td class="p-0 pl-px whitespace-nowrap border-r border-b border-[#d3d8de] ${cellule} ${fond}">${corriger(b)}</td></tr>`;
    });

    for (let n = 11; n <= 21; n++) {
      const l = legende[n];
      html += `<tr class="h-[14px]">${entete(n)}${l ? `<td class="p-0 pl-px border-b border-r border-[#e2e8f0] ${l[1]}">${corriger(l[0])}</td>` : vide}</tr>`;
    }
    html += `<tr class="h-[14px]">${entete('')}${vide}</tr>`;
    document.getElementById('cellules').innerHTML = html;

    // ---------- onglets ----------
    document.getElementById('onglets').innerHTML = ['Calendrier éditorial', 'Synthèse', 'Paramètres']
      .map(o => `<button class="px-[9px] h-[10px] leading-[10px] border-r border-[#c9c7c5]">${o}</button>`).join('') +
      '<button class="px-2 h-full bg-white font-bold border-b-2 border-[#8f918f]">Mode d’emploi</button>';
  </script>
</body>
</html>
